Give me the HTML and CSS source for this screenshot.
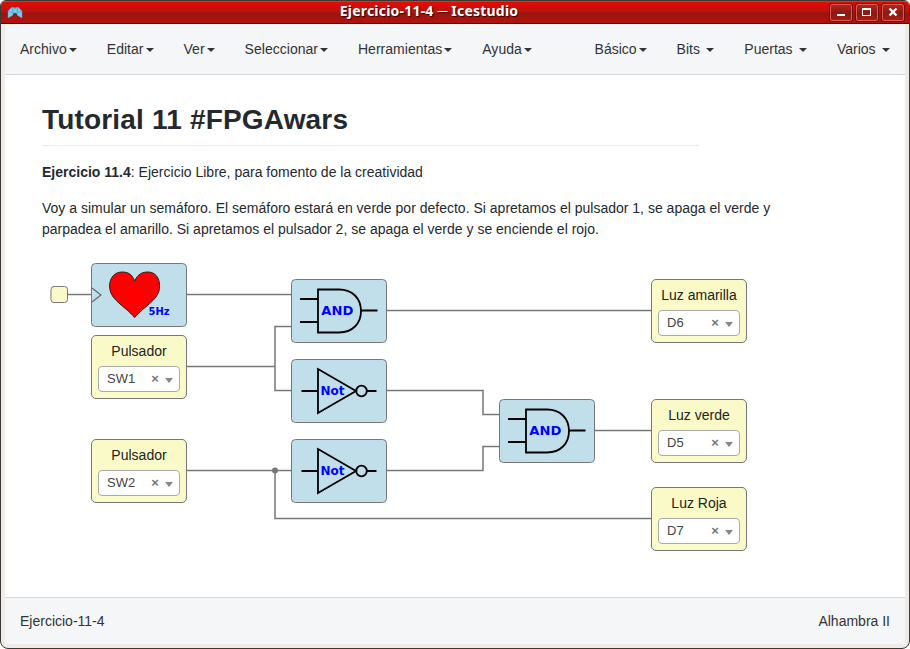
FILE: index.html
```html
<!DOCTYPE html>
<html lang="es">
<head>
<meta charset="utf-8">
<title>Ejercicio-11-4 ─ Icestudio</title>
<link rel="stylesheet" href="styles.css">
</head>
<body>
<div class="window">
  <header class="titlebar">
    <svg class="app-icon" width="16" height="14" viewBox="0 0 16 14"><path d="M1 5L5 1L8 2L11 1L15 5V12L10.500 9.500L9.500 7H6.500L5.500 9.500L1 12Z" fill="#7acdf0" stroke="#4b9dbd" stroke-width=".5"/><path d="M1 5L6 7L5 1M15 5L10 7L11 1M5 4L8 2L11 4" fill="none" stroke="#3b93b5" stroke-width=".5"/></svg>
    <h1 class="title">Ejercicio-11-4 ─ Icestudio</h1>
    <div class="controls">
      <span class="control"><svg width="21" height="16"><path d="M7 10h8v2h-8z" fill="#fff"/></svg></span>
      <span class="control"><svg width="21" height="16" shape-rendering="crispEdges"><path d="M6 4h9v8H6zM7 6v5h7V6z" fill="#fff" fill-rule="evenodd"/></svg></span>
      <span class="control"><svg width="21" height="16"><path d="M7.500 4.500L14.500 11.500M14.500 4.500L7.500 11.500" stroke="#fff" stroke-width="2.400"/></svg></span>
    </div>
  </header>
  <div class="frame">
    <nav class="menu">
      <div class="group main"><span class="item">Archivo<i class="caret"></i></span><span class="item">Editar<i class="caret"></i></span><span class="item">Ver<i class="caret"></i></span><span class="item">Seleccionar<i class="caret"></i></span><span class="item">Herramientas<i class="caret"></i></span><span class="item">Ayuda<i class="caret"></i></span></div>
      <div class="group"><span class="item">Básico<i class="caret"></i></span><span class="item">Bits<i class="caret spaced"></i></span><span class="item">Puertas<i class="caret spaced"></i></span><span class="item">Varios<i class="caret spaced"></i></span></div>
    </nav>
    <main class="canvas">
      <article class="notes">
        <h2>Tutorial 11 #FPGAwars</h2>
        <p><b>Ejercicio 11.4</b>: Ejercicio Libre, para fomento de la creatividad</p>
        <p>Voy a simular un semáforo. El semáforo estará en verde por defecto. Si apretamos el pulsador 1, se apaga el verde y<br>parpadea el amarillo. Si apretamos el pulsador 2, se apaga el verde y se enciende el rojo.</p>
      </article>
      <svg class="diagram" width="900" height="522" viewBox="5 75 900 522">
        <defs>
          <g id="and">
            <rect class="block" x=".5" y=".5" width="95" height="63" rx="4"/>
            <path class="gate" d="M27 10.500H48C62 10.500 70 20 70 32S62 53.500 48 53.500H27ZM9 20H27M9 43H27M70 31.500H86.500"/>
            <text class="label and-label" x="30.300" y="36" textLength="32" lengthAdjust="spacingAndGlyphs">AND</text>
          </g>
          <g id="not">
            <rect class="block" x=".5" y=".5" width="95" height="63" rx="4"/>
            <path class="gate" d="M27 10V54L65 32ZM10.500 32H27M76 32H85.500"/>
            <circle class="gate" cx="70.500" cy="32" r="5.300"/>
            <text class="label not-label" x="29.500" y="36">Not</text>
          </g>
        </defs>
        <path class="wire" d="M67 294.500H91M187 294.500H291M187 366.500H275V326.500H291M275 366.500V390.500H291M387 310.500H651M387 390.500H483V414.500H499M387 470.500H483V446.500H499M595 430.500H651M187 470.500H291M275 470.500V518.500H651"/>
        <circle cx="275" cy="470.500" r="3" fill="#777"/>
        <rect x="51" y="286.500" width="16.500" height="16" rx="3" fill="#fafac8" stroke="#777"/>
        <rect class="block" x="91.500" y="263.500" width="95" height="63" rx="4"/>
        <path d="M92 288L101 295L92 302" fill="none" stroke="#666" stroke-width="1.200"/>
        <path d="M134.600 281C138 273.500 143 272 148 272C155 272 159.600 277.500 159.600 286C159.600 300 145 305 134.600 317.500C124 305 109.600 300 109.600 286C109.600 277.500 115 272 122 272C127 272 132 273.500 134.600 281Z" fill="red" stroke="#222"/>
        <text class="label hz-label" x="148.500" y="315" textLength="21" lengthAdjust="spacingAndGlyphs">5Hz</text>
        <use href="#and" x="291" y="279"/>
        <use href="#not" x="291" y="359"/>
        <use href="#not" x="291" y="439"/>
        <use href="#and" x="499" y="399"/>
      </svg>
      <section class="pin sw1">Pulsador<div class="select"><span>SW1</span><b>×</b><i></i></div></section>
      <section class="pin sw2">Pulsador<div class="select"><span>SW2</span><b>×</b><i></i></div></section>
      <section class="pin d6">Luz amarilla<div class="select"><span>D6</span><b>×</b><i></i></div></section>
      <section class="pin d5">Luz verde<div class="select"><span>D5</span><b>×</b><i></i></div></section>
      <section class="pin d7">Luz Roja<div class="select"><span>D7</span><b>×</b><i></i></div></section>
    </main>
    <footer class="status"><span>Ejercicio-11-4</span><span>Alhambra II</span></footer>
  </div>
</div>
</body>
</html>
```
FILE: styles.css
```css
* { box-sizing: border-box; }
body { margin: 0; background: #fff; font: 14px/20px "Liberation Sans", Arial, sans-serif; color: #333; overflow: hidden; }
.window { width: 910px; height: 649px; display: flex; flex-direction: column; border: 1px solid #3c3835; border-radius: 6px 6px 8px 8px; overflow: hidden; background: #f0ebe7; }
.titlebar { height: 23px; flex: none; display: grid; grid-template-columns: 16px 1fr 74px; align-items: center; padding: 0 5px 0 6px; background: linear-gradient(#ef4b38 0, #e20d03 1px, #d60d05 5px, #b51410 11px, #97160f 12px, #b0130c 21px); border-bottom: 1px solid #4b0d0a; }
.app-icon { margin-top: 2px; }
.title { margin: -2px 0 0; padding-left: 5px; text-align: center; color: #fff; font: bold 14px/20px "Noto Sans", sans-serif; letter-spacing: .21px; text-shadow: 1px 1px 1px #300; white-space: nowrap; }
.controls { display: flex; justify-content: flex-end; gap: 4px; }
.control { width: 22px; height: 17px; flex: none; border: 1px solid #d65b50; border-radius: 2px; box-shadow: 0 0 0 1px #6d0f0a; background: linear-gradient(#b3241b, #8c1811 55%, #a51c13); }
.control svg { display: block; margin: -1px 0 0 -1px; }
.frame { flex: 1; display: flex; flex-direction: column; padding: 0 4px; min-height: 0; }
.menu { height: 51px; flex: none; display: flex; justify-content: space-between; background: #f5f6f8; border-bottom: 1px solid #d3d7da; }
.group { display: flex; }
.item { padding: 15px; display: flex; align-items: center; height: 50px; white-space: nowrap; }
.caret { border: 4px solid transparent; border-top-color: #333; border-bottom: 0; margin-left: 2px; margin-top: 1px; }
.main .item { letter-spacing: .02px; }
.caret.spaced { margin-left: 6.4px; }
.canvas { position: relative; height: 522px; flex: none; background: #fff; }
.notes { padding: 27px 0 0 37px; color: #24292e; line-height: 21px; }
.notes h2 { width: 657px; height: 44px; margin: 0 0 16px; font-size: 28px; line-height: 35px; letter-spacing: .18px; border-bottom: 1px solid #eaecef; }
.notes p { margin: 0 0 15px; white-space: nowrap; letter-spacing: .005px; }
.diagram { position: absolute; left: 0; top: 0; }
.wire { fill: none; stroke: #777; stroke-width: 1.5; }
.block { fill: #c0dfea; stroke: #777; }
.gate { fill: none; stroke: #000; stroke-width: 1.8; }
.label { fill: #00f; font-family: "DejaVu Sans", sans-serif; font-weight: bold; }
.and-label { font-size: 13px; }
.not-label { font-size: 12px; }
.hz-label { font-size: 10.5px; }
.pin { position: absolute; width: 96px; height: 64px; padding: 5px 6px 6px; background: #fafac8; border: 1px solid #777; border-radius: 5px; text-align: center; color: #222; white-space: nowrap; }
.sw1 { left: 86px; top: 260px; }
.sw2 { left: 86px; top: 364px; }
.d6 { left: 646px; top: 204px; }
.d5 { left: 646px; top: 324px; }
.d7 { left: 646px; top: 412px; }
.select { height: 26px; margin-top: 5px; padding: 0 6px 0 8px; display: flex; align-items: center; background: #fff; border: 1px solid #aaa; border-radius: 4px; font-size: 13px; color: #444; }
.select span { flex: 1; text-align: left; }
.select b { width: 8px; color: #777; }
.select i { border: 4px solid transparent; border-top: 5px solid #888; border-bottom: 0; margin: 3px 0 0 6px; }
.status { height: 47px; flex: none; padding: 0 15px; display: flex; justify-content: space-between; align-items: center; background: #f5f6f8; border-top: 1px solid #d3d7da; }
```
